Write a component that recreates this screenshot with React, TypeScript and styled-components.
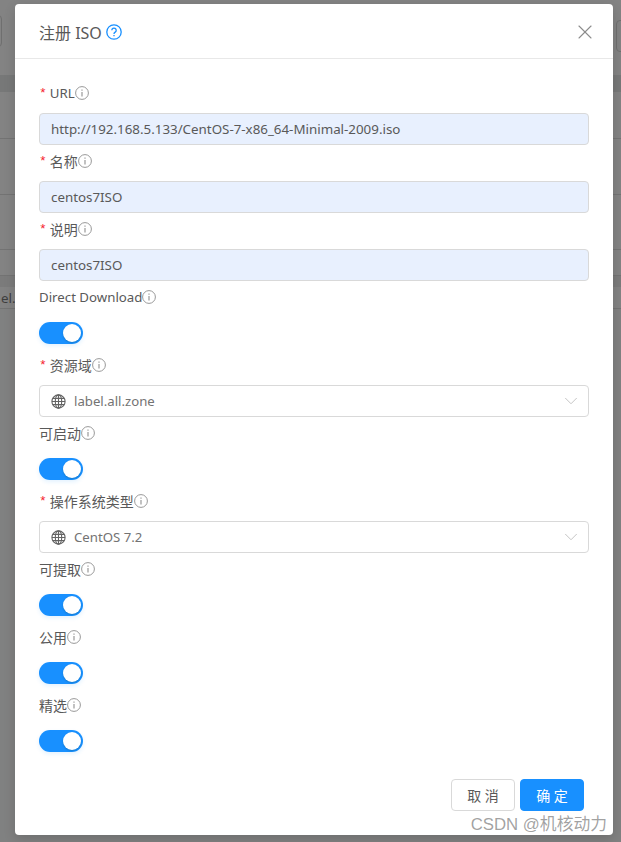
import React from 'react';
import styled, { createGlobalStyle } from 'styled-components';
import { ChevronDown, X } from 'lucide-react';

const GlobalStyle = createGlobalStyle`
  html, body {
    margin: 0;
    padding: 0;
    height: 100%;
    overflow: hidden;
    background: #808181;
  }
  * {
    box-sizing: border-box;
  }
`;

const Page = styled.div`
  position: relative;
  width: 621px;
  height: 842px;
  overflow: hidden;
  background: #808181;
  font-family: 'Noto Sans', 'Noto Sans CJK SC', sans-serif;
`;

/* the list page dimmed behind the dialog */
const Behind = styled.div`
  display: flex;
  flex-direction: column;
  background: #838383;
`;

const BehindBar = styled.div`
  height: 75px;
  display: flex;
  justify-content: space-between;
`;

const BehindButton = styled.div<{ $side: 'left' | 'right' }>`
  width: 40px;
  height: 32px;
  margin-top: ${p => (p.$side === 'left' ? 15 : 20)}px;
  margin-left: ${p => (p.$side === 'left' ? -38 : 0)}px;
  margin-right: ${p => (p.$side === 'right' ? -35 : 0)}px;
  border: 1px solid #6f6f6f;
  border-radius: 4px;
`;

const BehindHead = styled.div`
  height: 17px;
  background: #777878;
`;

const BehindRow = styled.div<{ $height: number }>`
  height: ${p => p.$height}px;
  border-bottom: 1px solid #737373;
`;

const BehindBand = styled.div`
  height: 11px;
  background: #7b7b7b;
`;

const BehindTag = styled.div`
  height: 22px;
  padding-left: 1px;
  border-bottom: 1px solid #737373;
  font-size: 13.35px;
  line-height: 22px;
  color: #3e3e3e;
`;

const Modal = styled.section`
  position: absolute;
  left: 15px;
  top: 4px;
  width: 598px;
  height: 831px;
  display: flex;
  flex-direction: column;
  background: #fff;
  border-radius: 4px;
  box-shadow: 0 4px 12px rgba(0, 0, 0, 0.15);
`;

const Header = styled.header`
  height: 55px;
  flex: none;
  display: flex;
  align-items: center;
  justify-content: space-between;
  padding: 1px 16px 0 24px;
  border-bottom: 1px solid #e8e8e8;
`;

const Title = styled.h2`
  margin: 0;
  display: flex;
  align-items: center;
  gap: 4px;
  font-size: 16px;
  font-weight: 400;
  color: #595959;
`;

const Form = styled.div`
  flex: 1;
  display: flex;
  flex-direction: column;
  padding: 24px 24px 0;
`;

const Item = styled.div`
  height: 68px;
  flex: none;
`;

const Label = styled.label<{ $latin: boolean }>`
  height: 20px;
  margin-bottom: 10px;
  display: flex;
  align-items: center;
  font-size: ${p => (p.$latin ? 13.25 : 14)}px;
  color: #595959;
`;

const Star = styled.span`
  color: #f5222d;
  font-family: 'Liberation Mono', monospace;
  font-size: 13px;
  margin-right: 3px;
`;

const Filled = styled.div`
  height: 32px;
  display: flex;
  align-items: center;
  padding: 0 11px;
  background: #e8f0fe;
  border: 1px solid #d9d9d9;
  border-radius: 4px;
  font-size: 13.35px;
  color: #595959;
`;

const Select = styled.div`
  height: 32px;
  display: flex;
  align-items: center;
  padding: 0 6px 0 11px;
  border: 1px solid #d9d9d9;
  border-radius: 4px;
  font-size: 13.2px;
  color: #737373;
`;

const SelectText = styled.span`
  flex: 1;
  margin-left: 8px;
`;

const Toggle = styled.div`
  width: 44px;
  height: 22px;
  margin-top: 15px;
  display: flex;
  justify-content: flex-end;
  align-items: center;
  padding-right: 2px;
  background: #1890ff;
  border-radius: 11px;
  box-shadow: 0 2px 4px rgba(24, 144, 255, 0.12);
`;

const Knob = styled.span`
  width: 18px;
  height: 18px;
  background: #fff;
  border-radius: 50%;
  box-shadow: 0 1px 2px rgba(0, 35, 11, 0.2);
`;

const Footer = styled.footer`
  display: flex;
  justify-content: flex-end;
  gap: 5px;
  padding: 0 29px 24px 0;
  margin-top: auto;
`;

const Button = styled.button<{ $primary?: boolean }>`
  width: 64px;
  height: 32px;
  padding: 0;
  border-radius: 4px;
  border: 1px solid ${p => (p.$primary ? '#1890ff' : '#d9d9d9')};
  background: ${p => (p.$primary ? '#1890ff' : '#fff')};
  color: ${p => (p.$primary ? '#fff' : '#595959')};
  font-family: inherit;
  font-size: 14px;
`;

const Watermark = styled.div`
  position: absolute;
  right: 14px;
  bottom: 7px;
  font-family: 'Liberation Sans', 'Noto Sans CJK SC', sans-serif;
  font-size: 16.8px;
  color: rgba(100, 100, 100, 0.6);
`;

const InfoIcon = () => (
  <svg width="14" height="14" viewBox="0 0 14 14" fill="none" stroke="#999">
    <circle cx="7" cy="7" r="6.4" />
    <path d="M7 6v4.4M7 3.4v1.3" strokeWidth="1.2" />
  </svg>
);

const HelpIcon = () => (
  <svg width="16" height="16" viewBox="0 0 16 16" fill="none" stroke="#1890ff" strokeWidth="1.3">
    <circle cx="8" cy="8" r="7.2" />
    <path d="M5.8 6.2a2.2 2.2 0 1 1 3.4 1.9c-.8.5-1.2.9-1.2 1.8M8 11v1.2" />
  </svg>
);

const GlobeIcon = () => (
  <svg width="15" height="15" viewBox="0 0 15 15" fill="none" stroke="#636363" strokeWidth="1.1">
    <circle cx="7.5" cy="7.5" r="6.6" />
    <ellipse cx="7.5" cy="7.5" rx="3.2" ry="6.6" />
    <path d="M1.5 4.4h12M1 7.5h13M1.5 10.6h12M7.5 1v13" />
  </svg>
);

type Field = {
  label: string;
  required?: boolean;
  kind: 'input' | 'select' | 'switch';
  value?: string;
};

const fields: Field[] = [
  { label: 'URL', required: true, kind: 'input', value: 'http://192.168.5.133/CentOS-7-x86_64-Minimal-2009.iso' },
  { label: '名称', required: true, kind: 'input', value: 'centos7ISO' },
  { label: '说明', required: true, kind: 'input', value: 'centos7ISO' },
  { label: 'Direct Download', kind: 'switch' },
  { label: '资源域', required: true, kind: 'select', value: 'label.all.zone' },
  { label: '可启动', kind: 'switch' },
  { label: '操作系统类型', required: true, kind: 'select', value: 'CentOS 7.2' },
  { label: '可提取', kind: 'switch' },
  { label: '公用', kind: 'switch' },
  { label: '精选', kind: 'switch' },
];

export default function App() {
  return (
    <Page>
      <GlobalStyle />
      <Behind>
        <BehindBar>
          <BehindButton $side="left" />
          <BehindButton $side="right" />
        </BehindBar>
        <BehindHead />
        <BehindRow $height={47} />
        <BehindRow $height={56} />
        <BehindRow $height={55} />
        <BehindRow $height={26} />
        <BehindBand />
        <BehindTag>el.</BehindTag>
      </Behind>
      <Modal>
        <Header>
          <Title>
            注册 ISO <HelpIcon />
          </Title>
          <X size={24} color="#8c8c8c" strokeWidth={1.1} />
        </Header>
        <Form>
          {fields.map(f => (
            <Item key={f.label}>
              <Label $latin={/^[\x00-\x7f]+$/.test(f.label)}>
                {f.required && <Star>*</Star>}
                {f.label}
                <InfoIcon />
              </Label>
              {f.kind === 'input' && <Filled>{f.value}</Filled>}
              {f.kind === 'select' && (
                <Select>
                  <GlobeIcon />
                  <SelectText>{f.value}</SelectText>
                  <ChevronDown size={22} color="#bfbfbf" strokeWidth={1} />
                </Select>
              )}
              {f.kind === 'switch' && (
                <Toggle>
                  <Knob />
                </Toggle>
              )}
            </Item>
          ))}
        </Form>
        <Footer>
          <Button>取 消</Button>
          <Button $primary>确 定</Button>
        </Footer>
      </Modal>
      <Watermark>CSDN @机核动力</Watermark>
    </Page>
  );
}
